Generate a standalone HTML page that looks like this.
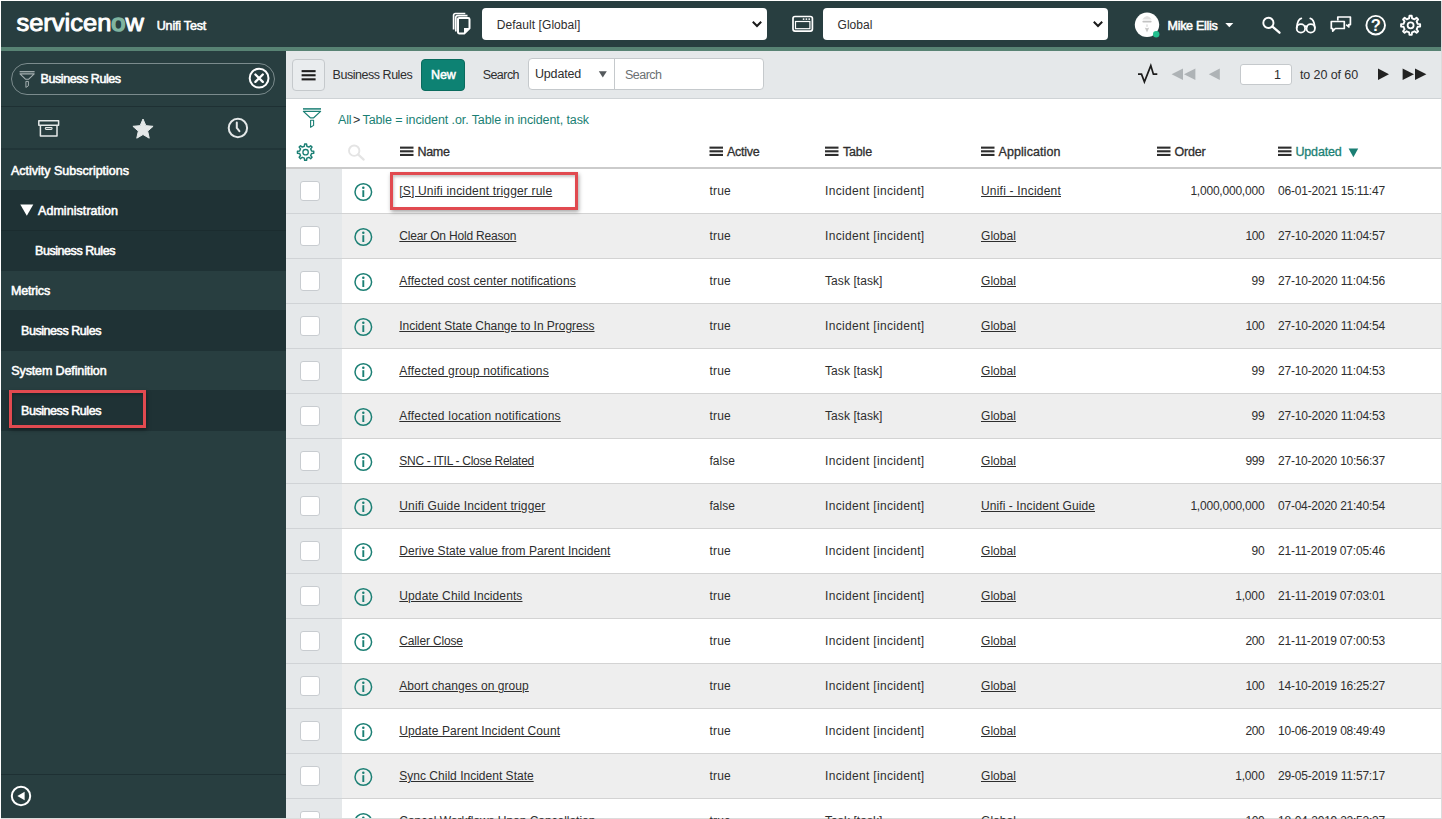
<!DOCTYPE html>
<html lang="en">
<head>
<meta charset="utf-8">
<title>Business Rules | Unifi Test</title>
<style>
html,body{margin:0;padding:0}
body{position:relative;width:1442px;height:819px;overflow:hidden;background:#fff;font-family:"Liberation Sans",sans-serif;font-size:12px;color:#2e2e2e}
div,span,svg{position:absolute;box-sizing:border-box}
.t{white-space:nowrap}
#hdr{left:1px;top:1px;width:1440px;height:46px;background:#283e40}
#stripe{left:1px;top:47px;width:1440px;height:4px;background:#588374}
#side{left:1px;top:51px;width:285px;height:767px;background:#283e40}
.child{left:0;width:285px;height:41px;background:#1f3235}
.sel{background:#fff;border-radius:4px;height:32px;top:8px}
#tool{left:286px;top:51px;width:1155px;height:48px;background:#e5e8ea;border-bottom:1px solid #cfd3d6}
.row{left:286px;width:1155px;height:45px;border-bottom:1px solid #d3d3d3}
.row.ev{background:#eeeeee}
.cbc{left:286px;width:56px;background:#e5e8ea}
.cb{left:300px;width:20px;height:20px;background:#fff;border:1px solid #c8ccd0;border-radius:3px}
.hl{border:3px solid #e14a50;box-shadow:1px 2px 4px rgba(0,0,0,.35),inset 1px 2px 3px rgba(0,0,0,.22)}
#edgeR{left:1441px;top:0;width:1px;height:819px;background:#dcdcdc}
#edgeB{left:0;top:818px;width:1442px;height:1px;background:#dcdcdc}
</style>
</head>
<body>
<div id="hdr"></div><div id="stripe"></div>
<div id="side"><div class="child" style="top:139px"></div><div class="child" style="top:179px"></div><div class="child" style="top:259px"></div><div class="child" style="top:339px"></div><div style="left:0;top:179px;width:285px;height:1px;background:#1b2c2f"></div><div style="left:0;top:55px;width:285px;height:1px;background:#1e3033"></div><div style="left:0;top:97px;width:285px;height:2px;background:#213538"></div><div style="left:0;top:723px;width:285px;height:1px;background:#1e3033"></div><div style="left:10px;top:12px;width:264px;height:32px;border:1px solid #7b8b8d;border-radius:16px"></div></div>
<div class="sel" style="left:482px;width:285px"></div><div class="sel" style="left:823px;width:285px"></div>
<div id="tool"></div>
<div style="left:286px;top:167px;width:1155px;height:2px;background:#cbcbcb"></div>
<div class="row" style="top:169px"></div>
<div class="row ev" style="top:214px"></div>
<div class="row" style="top:259px"></div>
<div class="row ev" style="top:304px"></div>
<div class="row" style="top:349px"></div>
<div class="row ev" style="top:394px"></div>
<div class="row" style="top:439px"></div>
<div class="row ev" style="top:484px"></div>
<div class="row" style="top:529px"></div>
<div class="row ev" style="top:574px"></div>
<div class="row" style="top:619px"></div>
<div class="row ev" style="top:664px"></div>
<div class="row" style="top:709px"></div>
<div class="row ev" style="top:754px"></div>
<div class="row" style="top:799px"></div>
<div class="cbc" style="top:169px;height:650px"></div>
<div style="left:286px;top:213px;width:56px;height:1px;background:#d0d3d6"></div>
<div class="cb" style="top:181px"></div>
<div style="left:286px;top:258px;width:56px;height:1px;background:#d0d3d6"></div>
<div class="cb" style="top:226px"></div>
<div style="left:286px;top:303px;width:56px;height:1px;background:#d0d3d6"></div>
<div class="cb" style="top:271px"></div>
<div style="left:286px;top:348px;width:56px;height:1px;background:#d0d3d6"></div>
<div class="cb" style="top:316px"></div>
<div style="left:286px;top:393px;width:56px;height:1px;background:#d0d3d6"></div>
<div class="cb" style="top:361px"></div>
<div style="left:286px;top:438px;width:56px;height:1px;background:#d0d3d6"></div>
<div class="cb" style="top:406px"></div>
<div style="left:286px;top:483px;width:56px;height:1px;background:#d0d3d6"></div>
<div class="cb" style="top:451px"></div>
<div style="left:286px;top:528px;width:56px;height:1px;background:#d0d3d6"></div>
<div class="cb" style="top:496px"></div>
<div style="left:286px;top:573px;width:56px;height:1px;background:#d0d3d6"></div>
<div class="cb" style="top:541px"></div>
<div style="left:286px;top:618px;width:56px;height:1px;background:#d0d3d6"></div>
<div class="cb" style="top:586px"></div>
<div style="left:286px;top:663px;width:56px;height:1px;background:#d0d3d6"></div>
<div class="cb" style="top:631px"></div>
<div style="left:286px;top:708px;width:56px;height:1px;background:#d0d3d6"></div>
<div class="cb" style="top:676px"></div>
<div style="left:286px;top:753px;width:56px;height:1px;background:#d0d3d6"></div>
<div class="cb" style="top:721px"></div>
<div style="left:286px;top:798px;width:56px;height:1px;background:#d0d3d6"></div>
<div class="cb" style="top:766px"></div>
<div style="left:286px;top:843px;width:56px;height:1px;background:#d0d3d6"></div>
<div class="cb" style="top:811px"></div>
<div style="left:292px;top:59px;width:33px;height:32px;border:1px solid #c5c9cc;border-radius:4px;background:#e9ecee"></div>
<div style="left:421px;top:59px;width:44px;height:32px;border:1px solid #0a6b5e;border-radius:4px;background:#0d8273"></div>
<div style="left:528px;top:58px;width:236px;height:32px;border:1px solid #c5c9cc;border-radius:4px;background:#fff"></div>
<div style="left:614px;top:59px;width:1px;height:30px;background:#c5c9cc"></div>
<div style="left:1240px;top:64px;width:52px;height:21px;border:1px solid #c5c9cc;border-radius:3px;background:#fff"></div>
<div class="hl" style="left:389.5px;top:171.5px;width:188px;height:38.5px"></div>
<div class="hl" style="left:9px;top:390px;width:137px;height:38px"></div>
<svg width="1442" height="819" viewBox="0 0 1442 819" style="left:0;top:0"><text x="16.4" y="31" font-family="Liberation Sans, sans-serif" font-weight="400" font-size="23.5" fill="#fff" stroke="#fff" stroke-width="0.9" stroke-linejoin="round" textLength="127.6" lengthAdjust="spacingAndGlyphs">servicen<tspan fill="#7fb4a0" stroke="#7fb4a0" stroke-width="1.5">o</tspan>w</text><g fill="none" stroke="#fff" stroke-linejoin="round"><path d="M453.6 29.4V15.2a1.7 1.7 0 0 1 1.7-1.7h10" stroke-width="1.7"/><path d="M455.8 31.6V17.4a1.7 1.7 0 0 1 1.7-1.7h10" stroke-width="1.7"/><path d="M458 19.2a1.3 1.3 0 0 1 1.3-1.3h8.9a1.3 1.3 0 0 1 1.3 1.3v9l-5.3 5.3h-4.9a1.3 1.3 0 0 1-1.3-1.3z" stroke-width="2"/></g><path d="M464 28h5.5l-5.5 5.6z" fill="#fff"/><g fill="none" stroke="#fff"><rect x="793" y="16.5" width="19.4" height="14.6" rx="2" stroke-width="1.7"/><rect x="795.5" y="21.5" width="14.4" height="7.2" stroke-width="1.2"/></g><g fill="#fff"><circle cx="803.6" cy="19.1" r="0.95"/><circle cx="806.4" cy="19.1" r="0.95"/><circle cx="809.2" cy="19.1" r="0.95"/></g><path d="M752.8 21.8l4.2 4.2 4.2-4.2" fill="none" stroke="#1a1a1a" stroke-width="2"/><path d="M1093.8 21.8l4.2 4.2 4.2-4.2" fill="none" stroke="#1a1a1a" stroke-width="2"/><circle cx="1147" cy="24.8" r="12.2" fill="#fff"/><g fill="#bdbdbd"><path d="M1142.2 19.6q4.8-7 9.6 0z" opacity=".45"/><rect x="1142.4" y="20.8" width="9.2" height="1.7" rx=".8" opacity=".9"/><path d="M1144.8 27.6q2.2 1.2 4.4 0l-2.2 5z" opacity=".85"/><rect x="1146.4" y="24.4" width="1.2" height="2.4" opacity=".6"/></g><circle cx="1156.2" cy="34.2" r="3.2" fill="#24c08f"/><path d="M1225.3 23h8l-4 4.3z" fill="#fff"/><g fill="none" stroke="#fff" stroke-width="1.9" stroke-linecap="round"><circle cx="1268.4" cy="22.9" r="5.1"/><path d="M1272.5 26.7l7 6" stroke-width="2.3"/></g><g fill="none" stroke="#fff" stroke-width="1.8" stroke-linecap="round"><circle cx="1300.9" cy="28.4" r="4.2"/><circle cx="1310.7" cy="28.4" r="4.2"/><path d="M1296.7 27.6c.4-4 1.6-8.6 4.6-9.2"/><path d="M1314.9 27.6c-.4-4-1.6-8.6-4.6-9.2"/><path d="M1304.6 26.6q1.2-1 2.4 0"/></g><g fill="none" stroke="#fff" stroke-width="1.7" stroke-linejoin="round"><path d="M1337.8 20.4v-3.4h12.6v7.6h-1.6v2.4l-2.6-2.4"/><path d="M1331.3 21.5h13v7h-9l-2.6 2.6v-2.6h-1.4z"/></g><circle cx="1375.7" cy="25.2" r="9.3" fill="none" stroke="#fff" stroke-width="1.9"/><text x="1375.7" y="31" text-anchor="middle" font-family="Liberation Sans, sans-serif" font-weight="700" font-size="16.5" fill="#fff">?</text><path d="M1409.13 18.25 L1409.46 15.77 L1411.74 15.77 L1412.07 18.25 L1414.54 19.27 L1416.54 17.76 L1418.14 19.36 L1416.63 21.36 L1417.65 23.83 L1420.13 24.16 L1420.13 26.44 L1417.65 26.77 L1416.63 29.24 L1418.14 31.24 L1416.54 32.84 L1414.54 31.33 L1412.07 32.35 L1411.74 34.83 L1409.46 34.83 L1409.13 32.35 L1406.66 31.33 L1404.66 32.84 L1403.06 31.24 L1404.57 29.24 L1403.55 26.77 L1401.07 26.44 L1401.07 24.16 L1403.55 23.83 L1404.57 21.36 L1403.06 19.36 L1404.66 17.76 L1406.66 19.27 Z" fill="none" stroke="#fff" stroke-width="1.9" stroke-linejoin="round"/><circle cx="1410.6" cy="25.3" r="3" fill="none" stroke="#fff" stroke-width="1.8"/><g fill="none" stroke="#a3aeaf" stroke-linejoin="round"><path d="M19.6 71.7h15" stroke-width="1.3"/><path d="M20 73.9h14.2l-5.7 5.4h-2.8z" stroke-width="1.1"/><path d="M25.9 81.4h2.5v4.4l-2.5 1.6z" stroke-width="1"/></g><g fill="none" stroke="#fff" stroke-width="2" stroke-linecap="round"><circle cx="259.1" cy="78.2" r="9.4"/><path d="M255.4 74.5l7.4 7.4M262.8 74.5l-7.4 7.4" stroke-width="2.3"/></g><g fill="none" stroke="#e4e8e8" stroke-width="1.5" stroke-linejoin="round"><rect x="38.8" y="120.7" width="19.8" height="4.6"/><path d="M40.4 125.3v10.6h16.6v-10.6"/><rect x="45.3" y="127.6" width="6.8" height="1.9" rx=".9" stroke-width="1.1"/></g><polygon points="143.00,119.00 145.88,125.64 153.08,126.32 147.66,131.11 149.23,138.18 143.00,134.50 136.77,138.18 138.34,131.11 132.92,126.32 140.12,125.64" fill="#e4e8e8" stroke="#e4e8e8" stroke-width="1" stroke-linejoin="round"/><g fill="none" stroke="#e4e8e8" stroke-width="2" stroke-linecap="round"><circle cx="237.9" cy="128" r="9.2"/><path d="M236.8 122.4v5.6l2.6 3.2"/></g><path d="M20.3 204.6h13l-6.5 11.2z" fill="#fff"/><circle cx="21" cy="796" r="9.2" fill="none" stroke="#fff" stroke-width="2"/><path d="M24.6 791.8v8.4l-7.2-4.2z" fill="#fff"/><rect x="301.6" y="70.1" width="14" height="2.1" fill="#1f1f1f"/><rect x="301.6" y="74.2" width="14" height="2.1" fill="#1f1f1f"/><rect x="301.6" y="78.3" width="14" height="2.1" fill="#1f1f1f"/><path d="M598.8 71.2h8l-4 6.4z" fill="#54595c"/><path d="M1138 74.2h3.5l2.9 7.6 6.4-16.2 2.6 8.6h3.9" fill="none" stroke="#1c1c1c" stroke-width="1.7" stroke-linejoin="miter" stroke-linecap="butt"/><g fill="#aeb3b6"><path d="M1183 68.4v11.6l-11.4-5.8z"/><path d="M1195.4 68.4v11.6l-11.4-5.8z"/><path d="M1219.8 68.4v11.6l-11-5.8z"/></g><g fill="#222"><path d="M1378 68.4v11.6l11-5.8z"/><path d="M1402.6 68.4v11.6l11.4-5.8z"/><path d="M1415 68.4v11.6l11.4-5.8z"/></g><g fill="none" stroke="#1b7f74" stroke-linejoin="round"><path d="M303 108.9h18" stroke-width="1.5"/><path d="M303.4 111.4h17.2l-6.9 6.4h-3.4z" stroke-width="1.2"/><path d="M310.6 120.2h3v5.2l-3 1.9z" stroke-width="1.1"/></g><path d="M304.35 146.23 L304.63 144.06 L306.57 144.06 L306.85 146.23 L308.94 147.10 L310.67 145.76 L312.04 147.13 L310.70 148.86 L311.57 150.95 L313.74 151.23 L313.74 153.17 L311.57 153.45 L310.70 155.54 L312.04 157.27 L310.67 158.64 L308.94 157.30 L306.85 158.17 L306.57 160.34 L304.63 160.34 L304.35 158.17 L302.26 157.30 L300.53 158.64 L299.16 157.27 L300.50 155.54 L299.63 153.45 L297.46 153.17 L297.46 151.23 L299.63 150.95 L300.50 148.86 L299.16 147.13 L300.53 145.76 L302.26 147.10 Z" fill="none" stroke="#1b7f74" stroke-width="1.45" stroke-linejoin="round"/><circle cx="305.6" cy="152.2" r="2.7" fill="none" stroke="#1b7f74" stroke-width="1.3"/><g fill="none" stroke="#e4e4e4" stroke-width="1.9" stroke-linecap="round"><circle cx="354.2" cy="150.7" r="5.2"/><path d="M358.3 154.6l5.4 5" stroke-width="2.2"/></g><rect x="400" y="146.6" width="13.5" height="2.1" fill="#2e2e2e"/><rect x="400" y="150.25" width="13.5" height="2.1" fill="#2e2e2e"/><rect x="400" y="153.9" width="13.5" height="2.1" fill="#2e2e2e"/><rect x="709.5" y="146.6" width="13.5" height="2.1" fill="#2e2e2e"/><rect x="709.5" y="150.25" width="13.5" height="2.1" fill="#2e2e2e"/><rect x="709.5" y="153.9" width="13.5" height="2.1" fill="#2e2e2e"/><rect x="825" y="146.6" width="13.5" height="2.1" fill="#2e2e2e"/><rect x="825" y="150.25" width="13.5" height="2.1" fill="#2e2e2e"/><rect x="825" y="153.9" width="13.5" height="2.1" fill="#2e2e2e"/><rect x="981" y="146.6" width="13.5" height="2.1" fill="#2e2e2e"/><rect x="981" y="150.25" width="13.5" height="2.1" fill="#2e2e2e"/><rect x="981" y="153.9" width="13.5" height="2.1" fill="#2e2e2e"/><rect x="1157" y="146.6" width="13.5" height="2.1" fill="#2e2e2e"/><rect x="1157" y="150.25" width="13.5" height="2.1" fill="#2e2e2e"/><rect x="1157" y="153.9" width="13.5" height="2.1" fill="#2e2e2e"/><rect x="1278" y="146.6" width="13.5" height="2.1" fill="#2e2e2e"/><rect x="1278" y="150.25" width="13.5" height="2.1" fill="#2e2e2e"/><rect x="1278" y="153.9" width="13.5" height="2.1" fill="#2e2e2e"/><path d="M1348.6 148.6h9.6l-4.8 8.6z" fill="#1b7f74"/><circle cx="363.3" cy="192" r="8.3" fill="none" stroke="#1b7f74" stroke-width="1.5"/><rect x="362.35" y="190.2" width="1.9" height="6.8" fill="#1b7f74"/><circle cx="363.3" cy="187.7" r="1.25" fill="#1b7f74"/><circle cx="363.3" cy="237" r="8.3" fill="none" stroke="#1b7f74" stroke-width="1.5"/><rect x="362.35" y="235.2" width="1.9" height="6.8" fill="#1b7f74"/><circle cx="363.3" cy="232.7" r="1.25" fill="#1b7f74"/><circle cx="363.3" cy="282" r="8.3" fill="none" stroke="#1b7f74" stroke-width="1.5"/><rect x="362.35" y="280.2" width="1.9" height="6.8" fill="#1b7f74"/><circle cx="363.3" cy="277.7" r="1.25" fill="#1b7f74"/><circle cx="363.3" cy="327" r="8.3" fill="none" stroke="#1b7f74" stroke-width="1.5"/><rect x="362.35" y="325.2" width="1.9" height="6.8" fill="#1b7f74"/><circle cx="363.3" cy="322.7" r="1.25" fill="#1b7f74"/><circle cx="363.3" cy="372" r="8.3" fill="none" stroke="#1b7f74" stroke-width="1.5"/><rect x="362.35" y="370.2" width="1.9" height="6.8" fill="#1b7f74"/><circle cx="363.3" cy="367.7" r="1.25" fill="#1b7f74"/><circle cx="363.3" cy="417" r="8.3" fill="none" stroke="#1b7f74" stroke-width="1.5"/><rect x="362.35" y="415.2" width="1.9" height="6.8" fill="#1b7f74"/><circle cx="363.3" cy="412.7" r="1.25" fill="#1b7f74"/><circle cx="363.3" cy="462" r="8.3" fill="none" stroke="#1b7f74" stroke-width="1.5"/><rect x="362.35" y="460.2" width="1.9" height="6.8" fill="#1b7f74"/><circle cx="363.3" cy="457.7" r="1.25" fill="#1b7f74"/><circle cx="363.3" cy="507" r="8.3" fill="none" stroke="#1b7f74" stroke-width="1.5"/><rect x="362.35" y="505.2" width="1.9" height="6.8" fill="#1b7f74"/><circle cx="363.3" cy="502.7" r="1.25" fill="#1b7f74"/><circle cx="363.3" cy="552" r="8.3" fill="none" stroke="#1b7f74" stroke-width="1.5"/><rect x="362.35" y="550.2" width="1.9" height="6.8" fill="#1b7f74"/><circle cx="363.3" cy="547.7" r="1.25" fill="#1b7f74"/><circle cx="363.3" cy="597" r="8.3" fill="none" stroke="#1b7f74" stroke-width="1.5"/><rect x="362.35" y="595.2" width="1.9" height="6.8" fill="#1b7f74"/><circle cx="363.3" cy="592.7" r="1.25" fill="#1b7f74"/><circle cx="363.3" cy="642" r="8.3" fill="none" stroke="#1b7f74" stroke-width="1.5"/><rect x="362.35" y="640.2" width="1.9" height="6.8" fill="#1b7f74"/><circle cx="363.3" cy="637.7" r="1.25" fill="#1b7f74"/><circle cx="363.3" cy="687" r="8.3" fill="none" stroke="#1b7f74" stroke-width="1.5"/><rect x="362.35" y="685.2" width="1.9" height="6.8" fill="#1b7f74"/><circle cx="363.3" cy="682.7" r="1.25" fill="#1b7f74"/><circle cx="363.3" cy="732" r="8.3" fill="none" stroke="#1b7f74" stroke-width="1.5"/><rect x="362.35" y="730.2" width="1.9" height="6.8" fill="#1b7f74"/><circle cx="363.3" cy="727.7" r="1.25" fill="#1b7f74"/><circle cx="363.3" cy="777" r="8.3" fill="none" stroke="#1b7f74" stroke-width="1.5"/><rect x="362.35" y="775.2" width="1.9" height="6.8" fill="#1b7f74"/><circle cx="363.3" cy="772.7" r="1.25" fill="#1b7f74"/><circle cx="363.3" cy="822" r="8.3" fill="none" stroke="#1b7f74" stroke-width="1.5"/><rect x="362.35" y="820.2" width="1.9" height="6.8" fill="#1b7f74"/><circle cx="363.3" cy="817.7" r="1.25" fill="#1b7f74"/></svg>
<div id="edgeR"></div><div id="edgeB"></div>
<div style="left:0;top:0;width:1442px;height:1px;background:#fff"></div><div style="left:0;top:0;width:1px;height:819px;background:#fff"></div>
<span class="t" style="top:17px;font-size:12.5px;line-height:18px;left:156.8px;color:#ffffff;letter-spacing:-0.199px;-webkit-text-stroke:0.55px #fff;">Unifi Test</span>
<span class="t" style="top:17px;font-size:12px;line-height:17px;left:496.7px;letter-spacing:0.068px;">Default [Global]</span>
<span class="t" style="top:17px;font-size:12px;line-height:17px;left:837.5px;letter-spacing:0.052px;">Global</span>
<span class="t" style="top:17px;font-size:12.5px;line-height:18px;left:1167.5px;color:#ffffff;letter-spacing:-0.280px;-webkit-text-stroke:0.55px #fff;">Mike Ellis</span>
<span class="t" style="top:70px;font-size:12.5px;line-height:18px;left:40.6px;color:#ffffff;letter-spacing:-0.440px;-webkit-text-stroke:0.55px #fff;">Business Rules</span>
<span class="t" style="top:162px;font-size:12.5px;line-height:18px;left:11px;color:#ffffff;letter-spacing:-0.005px;-webkit-text-stroke:0.55px #fff;">Activity Subscriptions</span>
<span class="t" style="top:202px;font-size:12.5px;line-height:18px;left:38px;color:#ffffff;letter-spacing:0.057px;-webkit-text-stroke:0.55px #fff;">Administration</span>
<span class="t" style="top:242px;font-size:12.5px;line-height:18px;left:35px;color:#ffffff;letter-spacing:-0.440px;-webkit-text-stroke:0.55px #fff;">Business Rules</span>
<span class="t" style="top:282px;font-size:12.5px;line-height:18px;left:11px;color:#ffffff;letter-spacing:-0.183px;-webkit-text-stroke:0.55px #fff;">Metrics</span>
<span class="t" style="top:322px;font-size:12.5px;line-height:18px;left:21px;color:#ffffff;letter-spacing:-0.440px;-webkit-text-stroke:0.55px #fff;">Business Rules</span>
<span class="t" style="top:362px;font-size:12.5px;line-height:18px;left:11.3px;color:#ffffff;letter-spacing:-0.122px;-webkit-text-stroke:0.55px #fff;">System Definition</span>
<span class="t" style="top:402px;font-size:12.5px;line-height:18px;left:21px;color:#ffffff;letter-spacing:-0.440px;-webkit-text-stroke:0.55px #fff;">Business Rules</span>
<span class="t" style="top:66px;font-size:12.5px;line-height:18px;left:332.6px;letter-spacing:-0.468px;">Business Rules</span>
<span class="t" style="top:66px;font-size:12.5px;line-height:18px;left:431px;color:#ffffff;letter-spacing:-0.105px;-webkit-text-stroke:0.5px #fff;">New</span>
<span class="t" style="top:66px;font-size:12.5px;line-height:18px;left:482.7px;letter-spacing:-0.552px;">Search</span>
<span class="t" style="top:65px;font-size:12.5px;line-height:18px;left:535px;letter-spacing:-0.181px;">Updated</span>
<span class="t" style="top:66px;font-size:12.5px;line-height:18px;left:625px;color:#6b7173;letter-spacing:-0.518px;">Search</span>
<span class="t" style="top:66px;font-size:12.5px;line-height:18px;right:161px;">1</span>
<span class="t" style="top:66px;font-size:12.5px;line-height:18px;left:1300px;letter-spacing:-0.098px;">to 20 of 60</span>
<span class="t" style="top:111px;font-size:12.5px;line-height:18px;left:338px;color:#1b7f74;letter-spacing:-0.135px;">All</span>
<span class="t" style="top:111px;font-size:12.5px;line-height:18px;left:353px;letter-spacing:-0.312px;">&gt;</span>
<span class="t" style="top:111px;font-size:12.5px;line-height:18px;left:362.5px;color:#1b7f74;letter-spacing:-0.096px;">Table = incident .or. Table in incident, task</span>
<span class="t" style="top:143px;font-size:12.5px;line-height:18px;left:417.5px;letter-spacing:-0.336px;-webkit-text-stroke:0.3px #2e2e2e;">Name</span>
<span class="t" style="top:143px;font-size:12.5px;line-height:18px;left:727px;letter-spacing:-0.258px;-webkit-text-stroke:0.3px #2e2e2e;">Active</span>
<span class="t" style="top:143px;font-size:12.5px;line-height:18px;left:843px;letter-spacing:-0.178px;-webkit-text-stroke:0.3px #2e2e2e;">Table</span>
<span class="t" style="top:143px;font-size:12.5px;line-height:18px;left:998.5px;letter-spacing:0.077px;-webkit-text-stroke:0.3px #2e2e2e;">Application</span>
<span class="t" style="top:143px;font-size:12.5px;line-height:18px;left:1174.5px;letter-spacing:-0.191px;-webkit-text-stroke:0.3px #2e2e2e;">Order</span>
<span class="t" style="top:143px;font-size:12.5px;line-height:18px;left:1295.5px;color:#1b7f74;letter-spacing:-0.181px;-webkit-text-stroke:0.3px #1b7f74;">Updated</span>
<span class="t" style="top:183px;font-size:12px;line-height:17px;left:399.3px;letter-spacing:0.180px;text-decoration:underline;">[S] Unifi incident trigger rule</span>
<span class="t" style="top:183px;font-size:12px;line-height:17px;left:709.5px;letter-spacing:0.203px;">true</span>
<span class="t" style="top:183px;font-size:12px;line-height:17px;left:825px;letter-spacing:0.321px;">Incident [incident]</span>
<span class="t" style="top:183px;font-size:12px;line-height:17px;left:981px;letter-spacing:0.206px;text-decoration:underline;">Unifi - Incident</span>
<span class="t" style="top:183px;font-size:12px;line-height:17px;left:1190.4px;letter-spacing:-0.212px;">1,000,000,000</span>
<span class="t" style="top:183px;font-size:12px;line-height:17px;left:1278px;letter-spacing:-0.187px;">06-01-2021 15:11:47</span>
<span class="t" style="top:228px;font-size:12px;line-height:17px;left:399.3px;letter-spacing:-0.187px;text-decoration:underline;">Clear On Hold Reason</span>
<span class="t" style="top:228px;font-size:12px;line-height:17px;left:709.5px;letter-spacing:0.203px;">true</span>
<span class="t" style="top:228px;font-size:12px;line-height:17px;left:825px;letter-spacing:0.321px;">Incident [incident]</span>
<span class="t" style="top:228px;font-size:12px;line-height:17px;left:981px;letter-spacing:0.052px;text-decoration:underline;">Global</span>
<span class="t" style="top:228px;font-size:12px;line-height:17px;left:1245.4px;letter-spacing:-0.344px;">100</span>
<span class="t" style="top:228px;font-size:12px;line-height:17px;left:1278px;letter-spacing:-0.187px;">27-10-2020 11:04:57</span>
<span class="t" style="top:273px;font-size:12px;line-height:17px;left:399.3px;letter-spacing:0.116px;text-decoration:underline;">Affected cost center notifications</span>
<span class="t" style="top:273px;font-size:12px;line-height:17px;left:709.5px;letter-spacing:0.203px;">true</span>
<span class="t" style="top:273px;font-size:12px;line-height:17px;left:825px;letter-spacing:0.074px;">Task [task]</span>
<span class="t" style="top:273px;font-size:12px;line-height:17px;left:981px;letter-spacing:0.052px;text-decoration:underline;">Global</span>
<span class="t" style="top:273px;font-size:12px;line-height:17px;left:1251.4px;letter-spacing:-0.180px;">99</span>
<span class="t" style="top:273px;font-size:12px;line-height:17px;left:1278px;letter-spacing:-0.187px;">27-10-2020 11:04:56</span>
<span class="t" style="top:318px;font-size:12px;line-height:17px;left:399.3px;letter-spacing:-0.044px;text-decoration:underline;">Incident State Change to In Progress</span>
<span class="t" style="top:318px;font-size:12px;line-height:17px;left:709.5px;letter-spacing:0.203px;">true</span>
<span class="t" style="top:318px;font-size:12px;line-height:17px;left:825px;letter-spacing:0.321px;">Incident [incident]</span>
<span class="t" style="top:318px;font-size:12px;line-height:17px;left:981px;letter-spacing:0.052px;text-decoration:underline;">Global</span>
<span class="t" style="top:318px;font-size:12px;line-height:17px;left:1245.4px;letter-spacing:-0.344px;">100</span>
<span class="t" style="top:318px;font-size:12px;line-height:17px;left:1278px;letter-spacing:-0.187px;">27-10-2020 11:04:54</span>
<span class="t" style="top:363px;font-size:12px;line-height:17px;left:399.3px;letter-spacing:0.180px;text-decoration:underline;">Affected group notifications</span>
<span class="t" style="top:363px;font-size:12px;line-height:17px;left:709.5px;letter-spacing:0.203px;">true</span>
<span class="t" style="top:363px;font-size:12px;line-height:17px;left:825px;letter-spacing:0.074px;">Task [task]</span>
<span class="t" style="top:363px;font-size:12px;line-height:17px;left:981px;letter-spacing:0.052px;text-decoration:underline;">Global</span>
<span class="t" style="top:363px;font-size:12px;line-height:17px;left:1251.4px;letter-spacing:-0.180px;">99</span>
<span class="t" style="top:363px;font-size:12px;line-height:17px;left:1278px;letter-spacing:-0.187px;">27-10-2020 11:04:53</span>
<span class="t" style="top:408px;font-size:12px;line-height:17px;left:399.3px;letter-spacing:0.203px;text-decoration:underline;">Affected location notifications</span>
<span class="t" style="top:408px;font-size:12px;line-height:17px;left:709.5px;letter-spacing:0.203px;">true</span>
<span class="t" style="top:408px;font-size:12px;line-height:17px;left:825px;letter-spacing:0.074px;">Task [task]</span>
<span class="t" style="top:408px;font-size:12px;line-height:17px;left:981px;letter-spacing:0.052px;text-decoration:underline;">Global</span>
<span class="t" style="top:408px;font-size:12px;line-height:17px;left:1251.4px;letter-spacing:-0.180px;">99</span>
<span class="t" style="top:408px;font-size:12px;line-height:17px;left:1278px;letter-spacing:-0.187px;">27-10-2020 11:04:53</span>
<span class="t" style="top:453px;font-size:12px;line-height:17px;left:399.3px;letter-spacing:-0.295px;text-decoration:underline;">SNC - ITIL - Close Related</span>
<span class="t" style="top:453px;font-size:12px;line-height:17px;left:709.5px;letter-spacing:0.028px;">false</span>
<span class="t" style="top:453px;font-size:12px;line-height:17px;left:825px;letter-spacing:0.321px;">Incident [incident]</span>
<span class="t" style="top:453px;font-size:12px;line-height:17px;left:981px;letter-spacing:0.052px;text-decoration:underline;">Global</span>
<span class="t" style="top:453px;font-size:12px;line-height:17px;left:1245.4px;letter-spacing:-0.344px;">999</span>
<span class="t" style="top:453px;font-size:12px;line-height:17px;left:1278px;letter-spacing:-0.234px;">27-10-2020 10:56:37</span>
<span class="t" style="top:498px;font-size:12px;line-height:17px;left:399.3px;letter-spacing:0.144px;text-decoration:underline;">Unifi Guide Incident trigger</span>
<span class="t" style="top:498px;font-size:12px;line-height:17px;left:709.5px;letter-spacing:0.028px;">false</span>
<span class="t" style="top:498px;font-size:12px;line-height:17px;left:825px;letter-spacing:0.321px;">Incident [incident]</span>
<span class="t" style="top:498px;font-size:12px;line-height:17px;left:981px;letter-spacing:0.088px;text-decoration:underline;">Unifi - Incident Guide</span>
<span class="t" style="top:498px;font-size:12px;line-height:17px;left:1190.4px;letter-spacing:-0.212px;">1,000,000,000</span>
<span class="t" style="top:498px;font-size:12px;line-height:17px;left:1278px;letter-spacing:-0.234px;">07-04-2020 21:40:54</span>
<span class="t" style="top:543px;font-size:12px;line-height:17px;left:399.3px;letter-spacing:0.040px;text-decoration:underline;">Derive State value from Parent Incident</span>
<span class="t" style="top:543px;font-size:12px;line-height:17px;left:709.5px;letter-spacing:0.203px;">true</span>
<span class="t" style="top:543px;font-size:12px;line-height:17px;left:825px;letter-spacing:0.321px;">Incident [incident]</span>
<span class="t" style="top:543px;font-size:12px;line-height:17px;left:981px;letter-spacing:0.052px;text-decoration:underline;">Global</span>
<span class="t" style="top:543px;font-size:12px;line-height:17px;left:1251.4px;letter-spacing:-0.180px;">90</span>
<span class="t" style="top:543px;font-size:12px;line-height:17px;left:1278px;letter-spacing:-0.187px;">21-11-2019 07:05:46</span>
<span class="t" style="top:588px;font-size:12px;line-height:17px;left:399.3px;letter-spacing:0.111px;text-decoration:underline;">Update Child Incidents</span>
<span class="t" style="top:588px;font-size:12px;line-height:17px;left:709.5px;letter-spacing:0.203px;">true</span>
<span class="t" style="top:588px;font-size:12px;line-height:17px;left:825px;letter-spacing:0.321px;">Incident [incident]</span>
<span class="t" style="top:588px;font-size:12px;line-height:17px;left:981px;letter-spacing:0.052px;text-decoration:underline;">Global</span>
<span class="t" style="top:588px;font-size:12px;line-height:17px;left:1235.2px;letter-spacing:-0.166px;">1,000</span>
<span class="t" style="top:588px;font-size:12px;line-height:17px;left:1278px;letter-spacing:-0.187px;">21-11-2019 07:03:01</span>
<span class="t" style="top:633px;font-size:12px;line-height:17px;left:399.3px;letter-spacing:-0.147px;text-decoration:underline;">Caller Close</span>
<span class="t" style="top:633px;font-size:12px;line-height:17px;left:709.5px;letter-spacing:0.203px;">true</span>
<span class="t" style="top:633px;font-size:12px;line-height:17px;left:825px;letter-spacing:0.321px;">Incident [incident]</span>
<span class="t" style="top:633px;font-size:12px;line-height:17px;left:981px;letter-spacing:0.052px;text-decoration:underline;">Global</span>
<span class="t" style="top:633px;font-size:12px;line-height:17px;left:1245.4px;letter-spacing:-0.344px;">200</span>
<span class="t" style="top:633px;font-size:12px;line-height:17px;left:1278px;letter-spacing:-0.187px;">21-11-2019 07:00:53</span>
<span class="t" style="top:678px;font-size:12px;line-height:17px;left:399.3px;letter-spacing:0.064px;text-decoration:underline;">Abort changes on group</span>
<span class="t" style="top:678px;font-size:12px;line-height:17px;left:709.5px;letter-spacing:0.203px;">true</span>
<span class="t" style="top:678px;font-size:12px;line-height:17px;left:825px;letter-spacing:0.321px;">Incident [incident]</span>
<span class="t" style="top:678px;font-size:12px;line-height:17px;left:981px;letter-spacing:0.052px;text-decoration:underline;">Global</span>
<span class="t" style="top:678px;font-size:12px;line-height:17px;left:1245.4px;letter-spacing:-0.344px;">100</span>
<span class="t" style="top:678px;font-size:12px;line-height:17px;left:1278px;letter-spacing:-0.234px;">14-10-2019 16:25:27</span>
<span class="t" style="top:723px;font-size:12px;line-height:17px;left:399.3px;letter-spacing:0.096px;text-decoration:underline;">Update Parent Incident Count</span>
<span class="t" style="top:723px;font-size:12px;line-height:17px;left:709.5px;letter-spacing:0.203px;">true</span>
<span class="t" style="top:723px;font-size:12px;line-height:17px;left:825px;letter-spacing:0.321px;">Incident [incident]</span>
<span class="t" style="top:723px;font-size:12px;line-height:17px;left:981px;letter-spacing:0.052px;text-decoration:underline;">Global</span>
<span class="t" style="top:723px;font-size:12px;line-height:17px;left:1245.4px;letter-spacing:-0.344px;">200</span>
<span class="t" style="top:723px;font-size:12px;line-height:17px;left:1278px;letter-spacing:-0.234px;">10-06-2019 08:49:49</span>
<span class="t" style="top:768px;font-size:12px;line-height:17px;left:399.3px;letter-spacing:0.013px;text-decoration:underline;">Sync Child Incident State</span>
<span class="t" style="top:768px;font-size:12px;line-height:17px;left:709.5px;letter-spacing:0.203px;">true</span>
<span class="t" style="top:768px;font-size:12px;line-height:17px;left:825px;letter-spacing:0.321px;">Incident [incident]</span>
<span class="t" style="top:768px;font-size:12px;line-height:17px;left:981px;letter-spacing:0.052px;text-decoration:underline;">Global</span>
<span class="t" style="top:768px;font-size:12px;line-height:17px;left:1235.2px;letter-spacing:-0.166px;">1,000</span>
<span class="t" style="top:768px;font-size:12px;line-height:17px;left:1278px;letter-spacing:-0.187px;">29-05-2019 11:57:17</span>
<span class="t" style="top:813px;font-size:12px;line-height:17px;left:399.3px;letter-spacing:-0.035px;text-decoration:underline;">Cancel Workflows Upon Cancellation</span>
<span class="t" style="top:813px;font-size:12px;line-height:17px;left:709.5px;letter-spacing:0.203px;">true</span>
<span class="t" style="top:813px;font-size:12px;line-height:17px;left:825px;letter-spacing:0.074px;">Task [task]</span>
<span class="t" style="top:813px;font-size:12px;line-height:17px;left:981px;letter-spacing:0.052px;text-decoration:underline;">Global</span>
<span class="t" style="top:813px;font-size:12px;line-height:17px;left:1245.4px;letter-spacing:-0.344px;">100</span>
<span class="t" style="top:813px;font-size:12px;line-height:17px;left:1278px;letter-spacing:-0.234px;">18-04-2019 22:52:37</span>
</body>
</html>
